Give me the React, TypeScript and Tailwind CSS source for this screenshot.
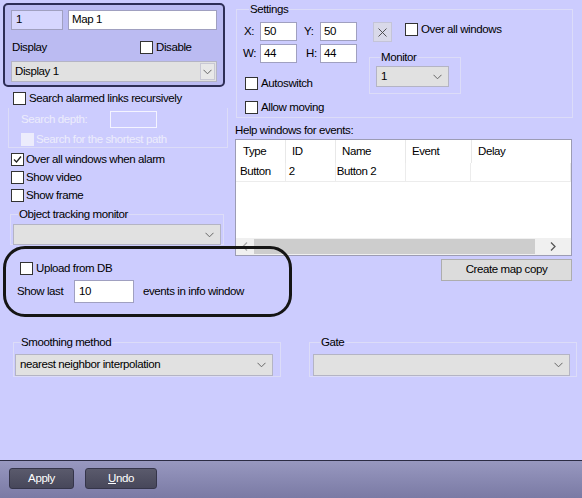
import React from "react";

const F = { fontFamily: '"Liberation Sans", Arial, sans-serif' };

function Check({ checked = false, disabled = false }: { checked?: boolean; disabled?: boolean }) {
  return (
    <div
      className={
        "w-[13px] h-[13px] shrink-0 flex items-center justify-center " +
        (disabled ? "bg-[#ececfc] border border-[#ececfc]" : "bg-white border border-[#333333]")
      }
    >
      {checked && (
        <svg width="9" height="9" viewBox="0 0 9 9">
          <path d="M1 4.5 L3.5 7 L8 1.5" stroke="#222" strokeWidth="1.3" fill="none" />
        </svg>
      )}
    </div>
  );
}

function Chevron() {
  return (
    <svg width="9" height="6" viewBox="0 0 9 6">
      <path d="M0.5 0.8 L4.5 4.8 L8.5 0.8" stroke="#666" strokeWidth="1" fill="none" />
    </svg>
  );
}

function Select({ text, className = "" }: { text?: string; className?: string }) {
  return (
    <div className={"h-[21px] bg-[#e1e1e1] border border-[#b4b4c4] flex items-center pl-[4px] pr-[6px] " + className}>
      <span className="flex-1 text-black">{text}</span>
      <Chevron />
    </div>
  );
}

export default function App() {
  return (
    <div style={F} className="relative w-[582px] h-[498px] bg-[#ccccfe] flex flex-col text-[11.5px] tracking-[-0.4px] text-black overflow-hidden">
      <div className="flex flex-1">
        {/* Left column */}
        <div className="w-[232px] shrink-0 flex flex-col">
          <div className="ml-[3px] mt-[3px] w-[222px] h-[84px] rounded-[5px] border-2 border-[#2e2e56] bg-[#bbbbf2] flex flex-col px-[6px] pt-[5px]">
            <div className="flex gap-[5px]">
              <div className="w-[52px] h-[20px] bg-[#d6d6fe] border border-[#a0a0c0] flex items-center pl-[4px]">1</div>
              <div className="w-[149px] h-[20px] bg-white border border-[#a0a0c0] flex items-center pl-[3px]">Map 1</div>
            </div>
            <div className="flex items-center mt-[11px] h-[13px]">
              <span className="w-[129px] pl-[1px]">Display</span>
              <div className="flex items-center gap-[3px]">
                <Check />
                <span>Disable</span>
              </div>
            </div>
            <div className="mt-[7px] w-[206px] h-[21px] bg-[#e1e1e1] border border-[#b4b4c4] flex items-center pl-[3px]">
              <span className="flex-1">Display 1</span>
              <div className="w-[15px] h-[17px] mr-[1px] bg-[#e8e8e8] border border-[#c8c8d4] flex items-center justify-center">
                <Chevron />
              </div>
            </div>
          </div>
          <div className="flex items-center gap-[3px] ml-[13px] mt-[5px] h-[13px]">
            <Check />
            <span>Search alarmed links recursively</span>
          </div>
          <div className="ml-[8px] mt-[3px] w-[220px] h-[40px] border border-[#dcdcf8] border-t-0 flex flex-col pl-[12px] pt-[3px]">
            <div className="flex items-center h-[17px]">
              <span className="w-[89px] text-[#ececfc]">Search depth:</span>
              <div className="w-[47px] h-[17px] border border-[#f4f4ff]"></div>
            </div>
            <div className="flex items-center gap-[1px] mt-[3px]">
              <Check disabled />
              <span className="text-[#ececfc] ml-[1px]">Search for the shortest path</span>
            </div>
          </div>
          <div className="flex flex-col gap-[5px] ml-[11px] mt-[5px]">
            <div className="flex items-center gap-[2px] h-[13px]">
              <Check checked />
              <span>Over all windows when alarm</span>
            </div>
            <div className="flex items-center gap-[2px] h-[13px]">
              <Check />
              <span>Show video</span>
            </div>
            <div className="flex items-center gap-[2px] h-[13px]">
              <Check />
              <span>Show frame</span>
            </div>
          </div>
          <fieldset className="ml-[10px] mt-[5px] w-[214px] h-[38px] border border-[#dcdcf8] px-[2px]">
            <legend className="ml-[5px] px-[1px] leading-[14px]">Object tracking monitor</legend>
            <Select className="mt-[3px]" />
          </fieldset>
          <div className="flex items-center gap-[3px] ml-[20px] mt-[17px] h-[13px]">
            <Check />
            <span>Upload from DB</span>
          </div>
          <div className="flex items-center ml-[17px] mt-[5px]">
            <span className="w-[57px] shrink-0 whitespace-nowrap">Show last</span>
            <div className="w-[60px] shrink-0 h-[23px] bg-white border border-[#a0a0c0] flex items-center pl-[4px]">10</div>
            <span className="ml-[9px] whitespace-nowrap">events in info window</span>
          </div>
        </div>

        {/* Right column */}
        <div className="flex-1 flex flex-col pl-[3px]">
          <fieldset className="ml-[1px] mt-[2px] w-[337px] h-[116px] border border-[#dcdcf8] pl-[6px]">
            <legend className="ml-[6px] px-[1px] leading-[14px]">Settings</legend>
            <div className="flex">
              <div className="flex flex-col gap-[3px] mt-[6px]">
                <div className="flex items-center">
                  <span className="w-[17px] pl-[1px]">X:</span>
                  <div className="w-[37px] h-[19px] bg-white border border-[#a0a0c0] pl-[3px] flex items-center">50</div>
                  <span className="w-[23px] pl-[7px]">Y:</span>
                  <div className="w-[37px] h-[19px] bg-white border border-[#a0a0c0] pl-[3px] flex items-center">50</div>
                </div>
                <div className="flex items-center">
                  <span className="w-[17px]">W:</span>
                  <div className="w-[37px] h-[19px] bg-white border border-[#a0a0c0] pl-[3px] flex items-center">44</div>
                  <span className="w-[23px] pl-[9px]">H:</span>
                  <div className="w-[37px] h-[19px] bg-white border border-[#a0a0c0] pl-[3px] flex items-center">44</div>
                </div>
                <div className="flex items-center gap-[3px] mt-[11px] ml-[2px] h-[13px]">
                  <Check />
                  <span>Autoswitch</span>
                </div>
                <div className="flex items-center gap-[3px] mt-[8px] ml-[2px] h-[13px]">
                  <Check />
                  <span>Allow moving</span>
                </div>
              </div>
              <div className="flex flex-col ml-[16px] mt-[6px]">
                <div className="flex items-start">
                  <div className="w-[19px] h-[20px] bg-[#d9d9e9] border border-[#c4c4d8] flex items-center justify-center">
                    <svg width="9" height="9" viewBox="0 0 9 9">
                      <path d="M0.5 0.5 L8.5 8.5 M8.5 0.5 L0.5 8.5" stroke="#444" strokeWidth="0.9" fill="none" />
                    </svg>
                  </div>
                  <div className="flex items-center gap-[3px] ml-[13px] mt-[1px] h-[13px]">
                    <Check />
                    <span>Over all windows</span>
                  </div>
                </div>
                <fieldset className="ml-[-4px] mt-[8px] w-[92px] h-[44px] border border-[#dcdcf8] px-[6px]">
                  <legend className="ml-[4px] px-[1px] leading-[14px]">Monitor</legend>
                  <Select text="1" className="w-[73px] mt-[2px]" />
                </fieldset>
              </div>
              <div className="flex-1"></div>
            </div>
          </fieldset>
          <div className="mt-[5px] leading-[14px]">Help windows for events:</div>
          <div className="mt-[2px] w-[337px] h-[117px] bg-white border border-[#9c9cb4] flex flex-col">
            <div className="flex h-[23px] items-center">
              <div className="w-[50px] h-full flex items-center pl-[7px] border-r border-[#e8e8e8]">Type</div>
              <div className="w-[50px] h-full flex items-center pl-[6px] border-r border-[#e8e8e8]">ID</div>
              <div className="w-[70px] h-full flex items-center pl-[6px] border-r border-[#e8e8e8]">Name</div>
              <div className="w-[66px] h-full flex items-center pl-[6px] border-r border-[#e8e8e8]">Event</div>
              <div className="flex-1 h-full flex items-center pl-[6px]">Delay</div>
            </div>
            <div className="flex h-[19px] items-center border-b border-[#ececec]">
              <div className="w-[50px] h-full flex items-center pl-[4px] border-r border-[#ececec]">Button</div>
              <div className="w-[50px] h-full flex items-center pl-[3px] border-r border-[#ececec]">2</div>
              <div className="w-[70px] h-full flex items-center pl-[1px] border-r border-[#ececec]">Button 2</div>
              <div className="w-[66px] h-full flex items-center border-r border-[#ececec]"></div>
              <div className="w-[100px] h-full border-r border-[#ececec]"></div>
            </div>
            <div className="flex-1"></div>
            <div className="h-[17px] bg-[#f0f0f0] flex items-center">
              <div className="w-[18px] flex items-center justify-center">
                <svg width="6" height="9" viewBox="0 0 6 9"><path d="M5 0.5 L1 4.5 L5 8.5" stroke="#aaa" strokeWidth="1.3" fill="none" /></svg>
              </div>
              <div className="w-[281px] h-[15px] bg-[#cdcdcd]"></div>
              <div className="flex-1 flex items-center justify-center">
                <svg width="6" height="9" viewBox="0 0 6 9"><path d="M1 0.5 L5 4.5 L1 8.5" stroke="#555" strokeWidth="1.3" fill="none" /></svg>
              </div>
            </div>
          </div>
          <div className="mt-[3px] ml-[206px] w-[131px] h-[22px] bg-[#dcdcdc] border border-[#adadad] flex items-center justify-center">
            Create map copy
          </div>
        </div>
      </div>

      {/* Smoothing and Gate */}
      <div className="flex mb-[83px]">
        <fieldset className="ml-[13px] w-[268px] h-[42px] border border-[#dcdcf8] px-[1px]">
          <legend className="ml-[5px] px-[1px] leading-[14px]">Smoothing method</legend>
          <Select text="nearest neighbor interpolation" className="w-[258px] mt-[5px] h-[22px]" />
        </fieldset>
        <fieldset className="ml-[28px] w-[268px] h-[42px] border border-[#dcdcf8] px-[3px]">
          <legend className="ml-[7px] px-[1px] leading-[14px]">Gate</legend>
          <Select className="w-[257px] mt-[5px] h-[22px]" />
        </fieldset>
      </div>

      {/* Bottom bar */}
      <div className="h-[38px] border-t border-[#2c2c44] bg-gradient-to-b from-[#9898c0] to-[#7a7aa4] flex items-center pl-[9px] gap-[11px] pb-[2px]">
        <div className="w-[65px] h-[21px] rounded-[3px] border border-[#35354a] bg-gradient-to-b from-[#5a5a6c] to-[#47475a] text-white flex items-center justify-center">Apply</div>
        <div className="w-[72px] h-[21px] rounded-[3px] border border-[#35354a] bg-gradient-to-b from-[#5a5a6c] to-[#47475a] text-white flex items-center justify-center">
          <span><span className="underline">U</span>ndo</span>
        </div>
      </div>

      {/* Annotation frame */}
      <div className="absolute left-[3px] top-[246px] w-[289px] h-[71px] rounded-[22px] border-[3px] border-[#151515] pointer-events-none"></div>
    </div>
  );
}
